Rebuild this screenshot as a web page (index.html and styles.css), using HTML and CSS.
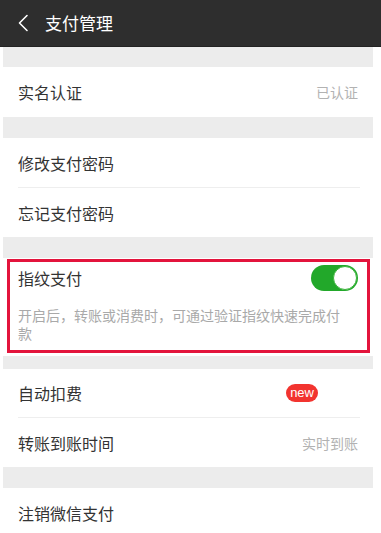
FILE: index.html
```html
<!DOCTYPE html>
<html lang="zh">
<head>
<meta charset="utf-8">
<title>支付管理</title>
<link rel="stylesheet" href="styles.css">
</head>
<body>
<header class="topbar">
  <svg class="back" width="12" height="18" viewBox="0 0 12 18"><path d="M10 1.5 L2.5 9 L10 16.5" fill="none" stroke="#fff" stroke-width="1.6" stroke-linecap="round" stroke-linejoin="round"/></svg>
  <span class="title">支付管理</span>
</header>
<main class="page">
  <div class="gap g1"></div>
  <section class="card">
    <div class="row r50"><span class="label">实名认证</span><span class="value">已认证</span></div>
  </section>
  <div class="gap"></div>
  <section class="card">
    <div class="row"><span class="label">修改支付密码</span></div>
    <div class="sep"></div>
    <div class="row"><span class="label">忘记支付密码</span></div>
  </section>
  <div class="gap"></div>
  <section class="card fp-card">
    <div class="highlight">
      <div class="fp-head">
        <span class="label">指纹支付</span>
        <span class="switch"><span class="knob"></span></span>
      </div>
      <p class="desc">开启后，转账或消费时，可通过验证指纹快速完成付款</p>
    </div>
  </section>
  <div class="gap g2"></div>
  <section class="card">
    <div class="row r48"><span class="label">自动扣费</span><span class="badge">new</span></div>
    <div class="sep"></div>
    <div class="row"><span class="label">转账到账时间</span><span class="value">实时到账</span></div>
  </section>
  <div class="gap"></div>
  <section class="card">
    <div class="row"><span class="label">注销微信支付</span></div>
  </section>
</main>
</body>
</html>
```

FILE: styles.css
```css
* { box-sizing: border-box; }
html, body { margin: 0; padding: 0; background: #fff; }
body {
  width: 381px;
  height: 533px;
  overflow: hidden;
  font-family: "Noto Sans CJK SC", "Noto Sans", sans-serif;
  color: #353535;
}
.topbar {
  height: 47px;
  background: #2e2e2e;
  display: flex;
  align-items: center;
  padding-left: 17px;
  border-bottom: 1px solid #232323;
}
.back { display: block; margin-right: 16px; margin-top: -1px; }
.title { color: #fff; font-size: 17px; line-height: 20px; margin-top: -1px; }
.page { width: 370px; margin-left: 3px; }
.gap { height: 21px; background: #ececec; }
.g1 { height: 20px; }
.g2 { height: 13px; }
.card { background: #fff; }
.row {
  height: 49px;
  display: flex;
  align-items: center;
  justify-content: space-between;
  padding: 0 15px;
}
.r50 { height: 50px; }
.r48 { height: 48px; }
.sep { height: 1px; background: #eeeeee; margin: 0 13px 0 15px; }
.label { font-size: 16px; line-height: 20px; color: #333333; }
.value { font-size: 14px; line-height: 18px; color: #b2b2b2; }
.badge {
  background: #f2342f;
  color: #fff;
  font-family: "Liberation Sans", Arial, sans-serif;
  font-size: 13px;
  line-height: 17px;
  height: 18px;
  padding: 0 4px 1px;
  border-radius: 9px;
  margin-right: 40px;
}
.fp-card { height: 98px; padding: 1px 3px 0 4px; }
.highlight {
  border: 3px solid #e3143c;
  height: 94px;
  padding: 0 9px 0 8px;
}
.fp-head {
  height: 31px;
  display: flex;
  align-items: center;
  justify-content: space-between;
}
.switch {
  width: 47px;
  height: 26px;
  border-radius: 13px;
  background: #22a82a;
  display: flex;
  justify-content: flex-end;
  align-items: center;
  padding: 1px;
}
.knob {
  width: 24px;
  height: 24px;
  border-radius: 50%;
  background: #fff;
  border: 1px solid #3cb53c;
}
.desc {
  margin: 13px 0 0;
  font-size: 14px;
  line-height: 18px;
  color: #a9a9a9;
  padding-right: 12px;
}
```
